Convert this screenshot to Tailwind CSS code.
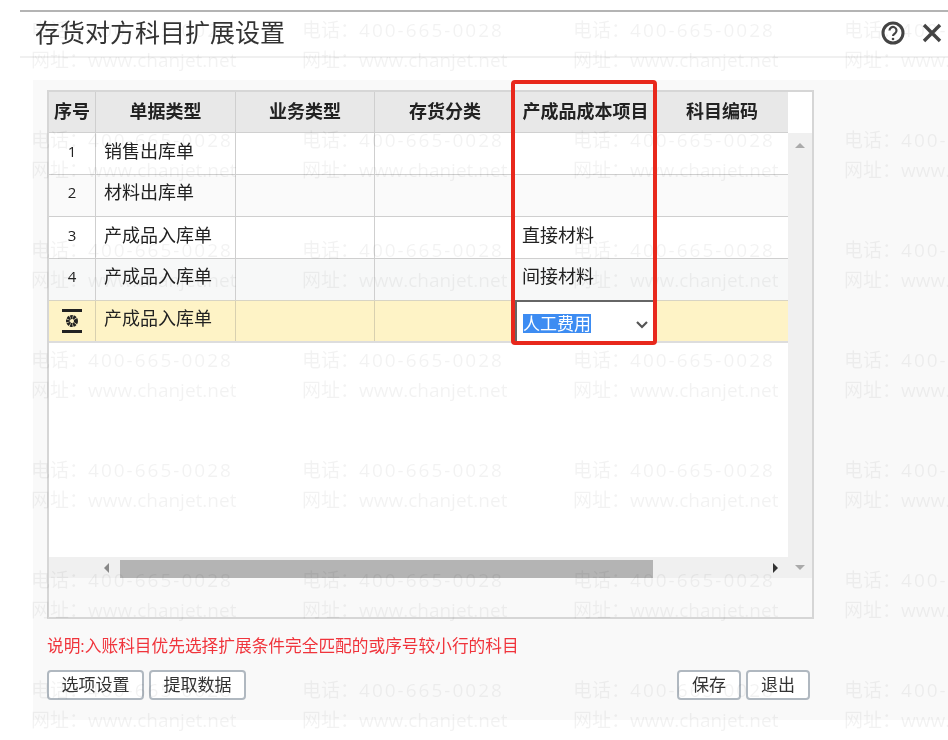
<!DOCTYPE html>
<html lang="zh-CN">
  <head>
    <meta charset="UTF-8" />
    <title>存货对方科目扩展设置</title>
    <script src="https://cdn.jsdelivr.net/npm/@tailwindcss/browser@4"></script>
  </head>
  <body class="bg-white">
    <div class="relative w-[948px] h-[740px] overflow-hidden bg-white font-['Open_Sans','Noto_Sans_CJK_SC',sans-serif] blur-[0.5px]">
      <!-- Dialog header -->
      <div class="pt-[10px] pl-[20px]">
        <div class="h-[48px] border-t-2 border-b-2 border-t-[#b4b4b4] border-b-[#f0f0f0] flex items-center justify-between pl-[15px] pr-[6px]">
          <h1 class="text-[25px] leading-[30px] font-normal text-[#333] -mt-[5px]">存货对方科目扩展设置</h1>
          <div class="flex items-center gap-[17px] -mt-[3px]">
            <svg width="24" height="24" viewBox="0 0 24 24" fill="none" stroke="#444" stroke-width="3">
              <circle cx="12" cy="12" r="10" />
              <path d="M8.5 9.5a3.5 3.5 0 1 1 5.6 2.8c-1.3.9-2.1 1.4-2.1 2.7" stroke-width="2.2" />
              <circle cx="12" cy="18" r="1.3" fill="#444" stroke="none" />
            </svg>
            <svg width="20" height="20" viewBox="0 0 20 20" fill="none" stroke="#444" stroke-width="3.4">
              <path d="M2 2l16 16M18 2L2 18" />
            </svg>
          </div>
        </div>
      </div>

      <!-- Panel -->
      <div class="mt-[22px] ml-[33px] h-[640px] bg-[#f9f9f9] pt-[10px] pl-[14px]">
        <div class="w-[767px] h-[529px] border-2 border-[#d6d6d6] bg-white flex flex-col">
          <div class="flex h-[41px]">
            <div class="flex w-[739px] bg-[#e8e8e8] text-[18px] font-bold text-[#222] text-center leading-[39px] border-b border-[#d0d0d0]">
              <div class="w-[47px] border-r border-[#cfcfcf]">序号</div>
              <div class="w-[140px] border-r border-[#cfcfcf]">单据类型</div>
              <div class="w-[139px] border-r border-[#cfcfcf]">业务类型</div>
              <div class="w-[140px]">存货分类</div>
              <div class="w-[141px]">产成品成本项目</div>
              <div class="w-[132px]">科目编码</div>
            </div>
          </div>
          <div class="flex flex-1 min-h-0">
            <div class="w-[739px] flex flex-col">
              <div class="flex h-[42px] border-b border-[#cfcfcf] bg-white text-[18px] leading-[36px] text-[#222]">
                <div class="w-[47px] border-r border-[#cfcfcf] text-center text-[15px]">1</div>
                <div class="w-[140px] border-r border-[#cfcfcf] pl-[8px]">销售出库单</div>
                <div class="w-[139px] border-r border-[#cfcfcf]"></div>
                <div class="w-[140px]"></div>
              </div>
              <div class="flex h-[42px] border-b border-[#cfcfcf] bg-[#fafafa] text-[18px] leading-[34px] text-[#222]">
                <div class="w-[47px] border-r border-[#cfcfcf] text-center text-[15px]">2</div>
                <div class="w-[140px] border-r border-[#cfcfcf] pl-[8px]">材料出库单</div>
                <div class="w-[139px] border-r border-[#cfcfcf]"></div>
                <div class="w-[140px]"></div>
              </div>
              <div class="flex h-[42px] border-b border-[#cfcfcf] bg-white text-[18px] leading-[36px] text-[#222]">
                <div class="w-[47px] border-r border-[#cfcfcf] text-center text-[15px]">3</div>
                <div class="w-[140px] border-r border-[#cfcfcf] pl-[8px]">产成品入库单</div>
                <div class="w-[139px] border-r border-[#cfcfcf]"></div>
                <div class="w-[140px] border-r border-[#cfcfcf]"></div>
                <div class="w-[141px] pl-[7px]">直接材料</div>
              </div>
              <div class="flex h-[42px] border-b border-[#d8d4c4] bg-[#f7f8f8] text-[18px] leading-[34px] text-[#222]">
                <div class="w-[47px] border-r border-[#cfcfcf] text-center text-[15px]">4</div>
                <div class="w-[140px] border-r border-[#cfcfcf] pl-[8px]">产成品入库单</div>
                <div class="w-[139px] border-r border-[#cfcfcf]"></div>
                <div class="w-[140px] border-r border-[#cfcfcf]"></div>
                <div class="w-[141px] pl-[7px]">间接材料</div>
              </div>
              <div class="flex h-[42px] border-b-2 border-[#ddd] bg-[#fef3c6] text-[18px] leading-[34px] text-[#222]">
                <div class="w-[47px] border-r border-[#d8d0b0] flex items-center justify-center">
                  <svg width="20" height="24" viewBox="0 0 20 24">
                    <path d="M0 1.5h20M0 22.5h20" stroke="#222" stroke-width="3" />
                    <circle cx="10" cy="12" r="4" fill="none" stroke="#222" stroke-width="4" stroke-dasharray="2.2 0.6" />
                  </svg>
                </div>
                <div class="w-[140px] border-r border-[#d8d0b0] pl-[8px]">产成品入库单</div>
                <div class="w-[139px] border-r border-[#d8d0b0]"></div>
                <div class="w-[140px]"></div>
                <div class="w-[139px] h-[42px] bg-white border-t-2 border-l-2 border-[#666] pl-[6px] flex items-center justify-between pr-[6px] -mt-px">
                  <span class="bg-[#3d8cf2] text-white text-[17px] leading-[19px] mt-[2px]">人工费用</span>
                  <svg width="12" height="8" viewBox="0 0 12 8" fill="none" stroke="#555" stroke-width="2.2" class="mt-[6px]"><path d="M1 1l5 5 5-5" /></svg>
                </div>
              </div>
              <div class="flex-1"></div>
              <!-- Horizontal scrollbar -->
              <div class="h-[21px] bg-[#f0f0f0] flex items-center pl-[71px]">
                <div class="w-[533px] h-[18px] mt-[2px] bg-[#b4b4b4] relative">
                  <span class="absolute -left-[16px] top-[3px] w-0 h-0 border-y-[5px] border-y-transparent border-r-[5px] border-r-[#888]"></span>
                </div>
                <span class="ml-[120px] w-0 h-0 border-y-[5px] border-y-transparent border-l-[5px] border-l-[#333]"></span>
              </div>
              <div class="h-[39px] bg-[#f9f9f9]"></div>
            </div>
            <!-- Vertical scrollbar -->
            <div class="w-[24px] flex flex-col">
              <div class="h-[445px] bg-[#f0f0f0] flex flex-col items-center justify-between pt-[10px] pb-[8px]">
                <span class="w-0 h-0 border-x-[5px] border-x-transparent border-b-[5px] border-b-[#aaa]"></span>
                <span class="w-0 h-0 border-x-[5px] border-x-transparent border-t-[5px] border-t-[#aaa]"></span>
              </div>
              <div class="flex-1 bg-[#f9f9f9]"></div>
            </div>
          </div>
        </div>

        <p class="mt-[16px] text-[16.7px] leading-[22px] text-[#f0343c]">说明:入账科目优先选择扩展条件完全匹配的或序号较小行的科目</p>

        <div class="mt-[13px] w-[763px] flex justify-between">
          <div class="flex gap-[5px]">
            <button class="w-[97px] h-[30px] bg-white border-2 border-[#b0b8c0] rounded-[4px] text-[17px] text-[#333]">选项设置</button>
            <button class="w-[97px] h-[30px] bg-white border-2 border-[#b0b8c0] rounded-[4px] text-[17px] text-[#333]">提取数据</button>
          </div>
          <div class="flex gap-[5px]">
            <button class="w-[64px] h-[30px] bg-white border-2 border-[#b0b8c0] rounded-[4px] text-[17px] text-[#333]">保存</button>
            <button class="w-[64px] h-[30px] bg-white border-2 border-[#b0b8c0] rounded-[4px] text-[17px] text-[#333]">退出</button>
          </div>
        </div>
      </div>

      <!-- Watermark over the page -->
      <div id="watermark" class="absolute inset-0 pointer-events-none pl-[31px] pt-[15px] grid grid-cols-[repeat(4,271px)] auto-rows-[110px] text-[19px] leading-[30px] text-black/[0.05]"></div>

      <!-- Red highlight box -->
      <div class="absolute left-[511px] top-[80px] w-[146px] h-[265px] border-[4px] border-[#e8281c] rounded-[4px] pointer-events-none"></div>
    </div>
    <script>
      var wm = document.getElementById("watermark");
      var html = "";
      for (var i = 0; i < 28; i++) {
        html += '<div class="whitespace-nowrap"><div>电话：<span class="tracking-[2px]">400-665-0028</span></div><div>网址：www.chanjet.net</div></div>';
      }
      wm.innerHTML = html;
    </script>
  </body>
</html>
